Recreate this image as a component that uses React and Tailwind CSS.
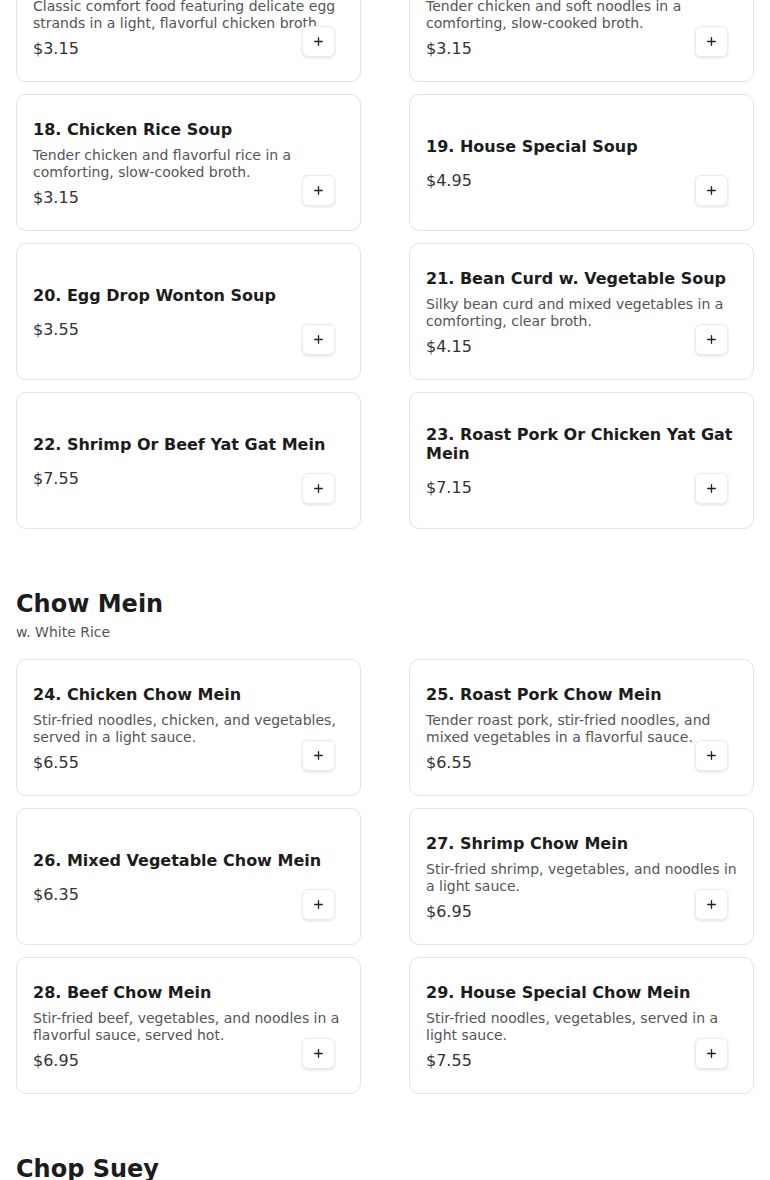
import { FiPlus } from 'react-icons/fi';

const sections = [
  {
    id: 'soup',
    items: [
      { n: 16, name: 'Egg Drop Soup', desc: 'Classic comfort food featuring delicate egg strands in a light, flavorful chicken broth.', price: '3.15' },
      { n: 17, name: 'Chicken Noodle Soup', desc: 'Tender chicken and soft noodles in a comforting, slow-cooked broth.', price: '3.15' },
      { n: 18, name: 'Chicken Rice Soup', desc: 'Tender chicken and flavorful rice in a comforting, slow-cooked broth.', price: '3.15' },
      { n: 19, name: 'House Special Soup', price: '4.95' },
      { n: 20, name: 'Egg Drop Wonton Soup', price: '3.55' },
      { n: 21, name: 'Bean Curd w. Vegetable Soup', desc: 'Silky bean curd and mixed vegetables in a comforting, clear broth.', price: '4.15' },
      { n: 22, name: 'Shrimp Or Beef Yat Gat Mein', price: '7.55' },
      { n: 23, name: 'Roast Pork Or Chicken Yat Gat Mein', price: '7.15' },
    ],
  },
  {
    id: 'chow-mein',
    title: 'Chow Mein',
    subtitle: 'w. White Rice',
    items: [
      { n: 24, name: 'Chicken Chow Mein', desc: 'Stir-fried noodles, chicken, and vegetables, served in a light sauce.', price: '6.55' },
      { n: 25, name: 'Roast Pork Chow Mein', desc: 'Tender roast pork, stir-fried noodles, and mixed vegetables in a flavorful sauce.', price: '6.55' },
      { n: 26, name: 'Mixed Vegetable Chow Mein', price: '6.35' },
      { n: 27, name: 'Shrimp Chow Mein', desc: 'Stir-fried shrimp, vegetables, and noodles in a light sauce.', price: '6.95' },
      { n: 28, name: 'Beef Chow Mein', desc: 'Stir-fried beef, vegetables, and noodles in a flavorful sauce, served hot.', price: '6.95' },
      { n: 29, name: 'House Special Chow Mein', desc: 'Stir-fried noodles, vegetables, served in a light sauce.', price: '7.55' },
    ],
  },
  {
    id: 'chop-suey',
    title: 'Chop Suey',
    subtitle: 'w. White Rice',
    items: [],
  },
];

function MenuCard({ item }) {
  return (
    <div className="relative h-[137px] flex flex-col justify-center px-4 pt-1 bg-white border border-[#e3e3e3] rounded-[10px]">
      <div>
        <h3 className="text-base font-bold leading-[19px] text-[#1c1c1c]">
          {item.n}. {item.name}
        </h3>
        {item.desc && (
          <p className="mt-2 text-sm leading-[17px] text-[#555555]">{item.desc}</p>
        )}
        <p className={`${item.desc ? 'mt-[5px]' : 'mt-[13px]'} text-base leading-6 text-[#333333]`}>
          ${item.price}
        </p>
      </div>
      <button
        type="button"
        className="absolute bottom-6 right-[25px] w-[33px] h-[31px] flex items-center justify-center bg-white border border-[#ececec] rounded-md shadow-[0_1px_3px_rgba(0,0,0,0.12)] text-[#222]"
      >
        <FiPlus className="w-[13px] h-[13px]" strokeWidth={2.5} />
      </button>
    </div>
  );
}

export default function App() {
  return (
    <div className="bg-white min-h-screen px-4 font-['DejaVu_Sans',sans-serif] overflow-hidden h-[1180px]">
      <div className="-mt-[55px]">
        {sections.map((section, i) => (
          <section key={section.id} className={i > 0 ? 'mt-[59px]' : ''}>
            {section.title && (
              <div className="mb-[17px]">
                <h2 className="text-2xl font-bold leading-8 text-[#1c1c1c]">{section.title}</h2>
                <p className="mt-[2px] text-sm leading-5 text-[#555555]">{section.subtitle}</p>
              </div>
            )}
            <div className="grid grid-cols-2 gap-x-12 gap-y-3">
              {section.items.map((item) => (
                <MenuCard key={item.n} item={item} />
              ))}
            </div>
          </section>
        ))}
      </div>
    </div>
  );
}
